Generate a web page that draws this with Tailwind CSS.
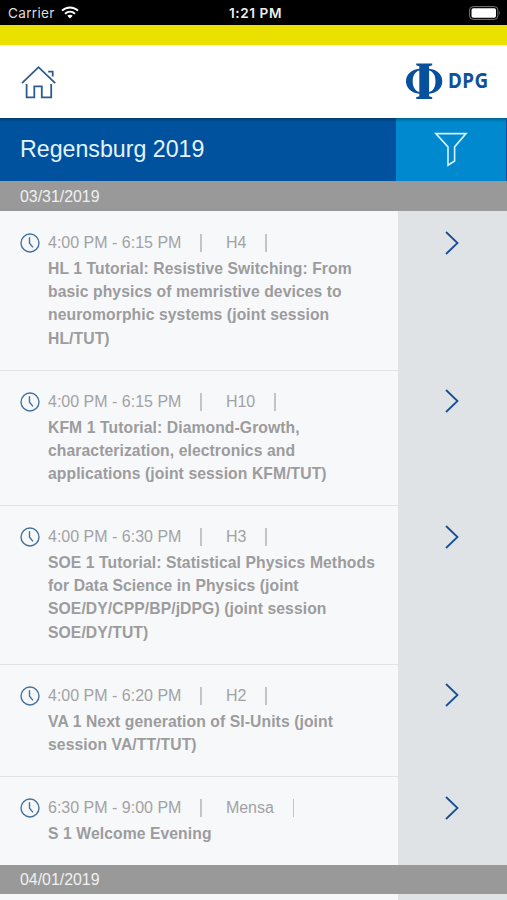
<!DOCTYPE html>
<html lang="en">
<head>
<meta charset="utf-8">
<title>Regensburg 2019</title>
<script src="https://cdn.jsdelivr.net/npm/@tailwindcss/browser@4"></script>
</head>
<body class="w-[507px] h-[900px] overflow-hidden bg-[#f7f8fa] font-['Liberation_Sans',Arial,sans-serif]">
<svg class="hidden">
  <symbol id="clock" viewBox="0 0 20 20"><circle cx="10" cy="10" r="9" fill="none" stroke="#44729f" stroke-width="1.4"/><path d="M9.5 4.3V10.3L13 14.400" fill="none" stroke="#44729f" stroke-width="1.4"/></symbol>
  <symbol id="chevron" viewBox="0 0 14 24"><path d="M1 1L12.5 12L1 23" fill="none" stroke="#164f96" stroke-width="1.8"/></symbol>
</svg>
<div class="flex h-[900px] flex-col">
  <div class="grid h-[25px] shrink-0 grid-cols-3 items-center bg-black pl-2 pr-[6px] font-['Inter',sans-serif] text-white">
    <div class="flex items-center gap-[6px]">
      <span class="pt-[1px] text-[13.6px] leading-4 tracking-[0.3px] text-[#dddddd]">Carrier</span>
      <svg class="h-[13px] w-[18px]" viewBox="0 0 18 13" fill="none" stroke="#fff" stroke-width="2"><path d="M1 4.6C5.5.3 12.500.3 17 4.600M4 7.700C7 5 11 5 14 7.700"/><path d="M9 12.500L6.300 9.700C7.800 8.400 10.200 8.400 11.700 9.700Z" fill="#fff" stroke="none"/></svg>
    </div>
    <div class="whitespace-nowrap pl-[2px] pt-[1px] text-center text-[13.6px] font-semibold leading-4 tracking-[0.6px] text-[#eeeeee]">1:21 PM</div>
    <svg class="h-[14px] w-[32px] justify-self-end" viewBox="0 0 32 14"><rect x=".6" y=".6" width="28.300" height="12.800" rx="3.500" fill="none" stroke="#777"/><rect x="2.500" y="2.300" width="24.500" height="9.400" rx="1.800" fill="#fff"/><path d="M30.300 5Q32 7 30.300 9Z" fill="#777"/></svg>
  </div>
  <div class="h-[19.500px] shrink-0 bg-[#eae100]"></div>
  <header class="flex h-[73.500px] shrink-0 items-start justify-between bg-white pl-[21px] pr-[18px]">
    <svg class="mt-[20px] h-[36px] w-[36px]" viewBox="0 0 36 36" fill="none" stroke="#2c5c8f" stroke-width="1.800"><path d="M1 18.200L17.500 2.200L34.200 18.200M5.600 19V32.400H13.300V21.300H20.800V32.400H30.200V19M27.200 6.700H31.700V11.500"/></svg>
    <div class="flex items-start">
      <svg class="mt-[18px] h-[37px] w-[38px]" viewBox="0 0 38 37"><path fill="#07509c" fill-rule="evenodd" d="M11.200.500H27.200V2.300L24.100 3.300V5.700C32 6.500 37.300 11.500 37.300 18.200S32 30 24.100 30.800V33.200L27.200 34.300V36H11.200V34.300L14.300 33.200V30.800C6.500 30 1 25 1 18.200S6.500 6.500 14.300 5.700V3.300L11.200 2.300ZM14.300 7.500C10 8.700 7.700 12.500 7.700 18.200S10 27.800 14.300 29ZM24.100 7.500V29C28.300 27.800 30.500 24 30.500 18.200S28.300 8.700 24.100 7.500Z"/></svg>
      <span class="ml-[4px] mt-[22px] block w-[42px] whitespace-nowrap font-['Noto_Sans',sans-serif] text-[21px] font-bold leading-[26px] text-[#11519a]"><span class="ml-[1px] inline-block origin-left scale-x-[0.900] tracking-[0.500px]">DPG</span></span>
    </div>
  </header>
  <div class="flex h-[63px] shrink-0 bg-[#00519e]">
    <h1 class="w-[396px] bg-linear-to-b from-[#003b70] to-[#00519e] to-[4px] pl-[20px] pt-[16px] text-[23.200px] leading-[30px] text-[#e4f4ff]">Regensburg 2019</h1>
    <div class="w-[110px] bg-linear-to-b from-[#006391] to-[#0089cf] to-[4px]">
      <svg class="ml-[38px] mt-[13px] h-[36px] w-[34px]" viewBox="0 0 34 36" fill="none" stroke="#d8f3ff" stroke-width="1.600"><path d="M1.800 2.600H32L20.600 15.900V30L14 34.200V15.900Z"/></svg>
    </div>
  </div>
  <div class="h-[30px] shrink-0 bg-[#999] pl-[20px] pt-[4px] text-[15.900px] leading-[24px] text-[#f0f0f0]">03/31/2019</div>

  <article class="flex h-[160px] shrink-0">
    <div class="w-[398px] border-b border-[#e0e3e6] pl-[20px] pt-[19px]">
      <div class="flex h-[26px] items-center text-[16px] text-[#a2a2a4]"><svg class="mr-2 size-5"><use href="#clock"/></svg><span>4:00 PM - 6:15 PM</span><i class="ml-[19px] mr-[24px] h-[18px] w-[1.500px] bg-[#c4c4c6]"></i><span>H4</span><i class="ml-[19px] h-[18px] w-[1.500px] bg-[#c4c4c6]"></i></div>
      <p class="ml-[28px] mt-[1px] whitespace-nowrap text-[15.700px] font-bold leading-[23.200px] tracking-[0.090px] text-[#9c9c9e]">HL 1 Tutorial: Resistive Switching: From<br>basic physics of memristive devices to<br>neuromorphic systems (joint session<br>HL/TUT)</p>
    </div>
    <div class="flex-1 bg-[#dfe3e6] pl-[47px] pt-[20px]"><svg class="h-[24px] w-[14px]"><use href="#chevron"/></svg></div>
  </article>
  <article class="flex h-[135px] shrink-0">
    <div class="w-[398px] border-b border-[#e0e3e6] pl-[20px] pt-[18px]">
      <div class="flex h-[26px] items-center text-[16px] text-[#a2a2a4]"><svg class="mr-2 size-5"><use href="#clock"/></svg><span>4:00 PM - 6:15 PM</span><i class="ml-[19px] mr-[24px] h-[18px] w-[1.500px] bg-[#c4c4c6]"></i><span>H10</span><i class="ml-[19px] h-[18px] w-[1.500px] bg-[#c4c4c6]"></i></div>
      <p class="ml-[28px] mt-[1px] whitespace-nowrap text-[15.700px] font-bold leading-[23.200px] tracking-[0.090px] text-[#9c9c9e]">KFM 1 Tutorial: Diamond-Growth,<br>characterization, electronics and<br>applications (joint session KFM/TUT)</p>
    </div>
    <div class="flex-1 bg-[#dfe3e6] pl-[47px] pt-[18px]"><svg class="h-[24px] w-[14px]"><use href="#chevron"/></svg></div>
  </article>
  <article class="flex h-[159px] shrink-0">
    <div class="w-[398px] border-b border-[#e0e3e6] pl-[20px] pt-[18px]">
      <div class="flex h-[26px] items-center text-[16px] text-[#a2a2a4]"><svg class="mr-2 size-5"><use href="#clock"/></svg><span>4:00 PM - 6:30 PM</span><i class="ml-[19px] mr-[24px] h-[18px] w-[1.500px] bg-[#c4c4c6]"></i><span>H3</span><i class="ml-[19px] h-[18px] w-[1.500px] bg-[#c4c4c6]"></i></div>
      <p class="ml-[28px] mt-[1px] whitespace-nowrap text-[15.700px] font-bold leading-[23.200px] tracking-[0.090px] text-[#9c9c9e]">SOE 1 Tutorial: Statistical Physics Methods<br>for Data Science in Physics (joint<br>SOE/DY/CPP/BP/jDPG) (joint session<br>SOE/DY/TUT)</p>
    </div>
    <div class="flex-1 bg-[#dfe3e6] pl-[47px] pt-[19px]"><svg class="h-[24px] w-[14px]"><use href="#chevron"/></svg></div>
  </article>
  <article class="flex h-[112px] shrink-0">
    <div class="w-[398px] border-b border-[#e0e3e6] pl-[20px] pt-[18px]">
      <div class="flex h-[26px] items-center text-[16px] text-[#a2a2a4]"><svg class="mr-2 size-5"><use href="#clock"/></svg><span>4:00 PM - 6:20 PM</span><i class="ml-[19px] mr-[24px] h-[18px] w-[1.500px] bg-[#c4c4c6]"></i><span>H2</span><i class="ml-[19px] h-[18px] w-[1.500px] bg-[#c4c4c6]"></i></div>
      <p class="ml-[28px] mt-[1px] whitespace-nowrap text-[15.700px] font-bold leading-[23.200px] tracking-[0.090px] text-[#9c9c9e]">VA 1 Next generation of SI-Units (joint<br>session VA/TT/TUT)</p>
    </div>
    <div class="flex-1 bg-[#dfe3e6] pl-[47px] pt-[18px]"><svg class="h-[24px] w-[14px]"><use href="#chevron"/></svg></div>
  </article>
  <article class="flex h-[88px] shrink-0">
    <div class="w-[398px] pl-[20px] pt-[18px]">
      <div class="flex h-[26px] items-center text-[16px] text-[#a2a2a4]"><svg class="mr-2 size-5"><use href="#clock"/></svg><span>6:30 PM - 9:00 PM</span><i class="ml-[19px] mr-[24px] h-[18px] w-[1.500px] bg-[#c4c4c6]"></i><span>Mensa</span><i class="ml-[19px] h-[18px] w-[1.500px] bg-[#c4c4c6]"></i></div>
      <p class="ml-[28px] mt-[1px] whitespace-nowrap text-[15.700px] font-bold leading-[23.200px] tracking-[0.090px] text-[#9c9c9e]">S 1 Welcome Evening</p>
    </div>
    <div class="flex-1 bg-[#dfe3e6] pl-[47px] pt-[19px]"><svg class="h-[24px] w-[14px]"><use href="#chevron"/></svg></div>
  </article>
  <div class="h-[29px] shrink-0 bg-[#999] pl-[20px] pt-[3px] text-[15.900px] leading-[24px] text-[#f0f0f0]">04/01/2019</div>
  <div class="flex flex-1"><div class="w-[398px]"></div><div class="flex-1 bg-[#dfe3e6]"></div></div>
</div>
</body>
</html>
